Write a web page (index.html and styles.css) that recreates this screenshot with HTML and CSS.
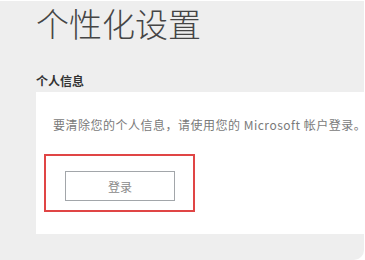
FILE: index.html
```html
<!DOCTYPE html>
<html lang="zh-CN">
<head>
    <meta charset="UTF-8">
    <meta name="viewport" content="width=device-width, initial-scale=1.0">
    <title>个性化设置</title>
    <link rel="stylesheet" href="styles.css">
</head>
<body>
    <div class="panel">
        <h1 class="page-title">个性化设置</h1>

        <!-- 个人信息 -->
        <h2 class="section-title">个人信息</h2>
        <div class="card">
            <p class="card-text">要清除您的个人信息，请使用您的 Microsoft 帐户登录。</p>
            <div class="highlight">
                <button class="login-button">登录</button>
            </div>
        </div>
    </div>
</body>
</html>
```

FILE: styles.css
```css
body {
    margin: 0;
    padding: 0;
    background-color: #ffffff;
    font-family: "Noto Sans CJK SC", "Liberation Sans", sans-serif;
}

.panel {
    margin-top: 1px;
    width: 364px;
    height: 259px;
    padding-top: 3px;
    padding-left: 36px;
    box-sizing: border-box;
    background-color: #eeeeee;
    border-bottom-right-radius: 10px;
}

.page-title {
    margin: 0;
    font-size: 33px;
    line-height: 38px;
    font-weight: 300;
    color: #454545;
}

.section-title {
    margin: 31px 0 0 0;
    font-size: 12px;
    line-height: 16px;
    font-weight: bold;
    color: #333;
}

.card {
    margin-top: 3px;
    height: 142px;
    background-color: #ffffff;
    padding: 24px 0 0 8px;
    box-sizing: border-box;
}

.card-text {
    margin: 0 0 0 9px;
    font-size: 12px;
    line-height: 18px;
    letter-spacing: 0.5px;
    color: #7a7a7a;
    white-space: nowrap;
}

.highlight {
    margin-top: 20px;
    width: 151px;
    height: 58px;
    box-sizing: border-box;
    border: 2px solid #e04545;
    padding: 15px 0 0 19px;
}

.login-button {
    width: 110px;
    height: 30px;
    background-color: #ffffff;
    border: 1px solid #a2a6aa;
    border-radius: 0;
    font-family: "Noto Sans CJK SC", sans-serif;
    font-size: 12px;
    color: #8a8a8a;
    padding: 0;
    cursor: pointer;
}
```
